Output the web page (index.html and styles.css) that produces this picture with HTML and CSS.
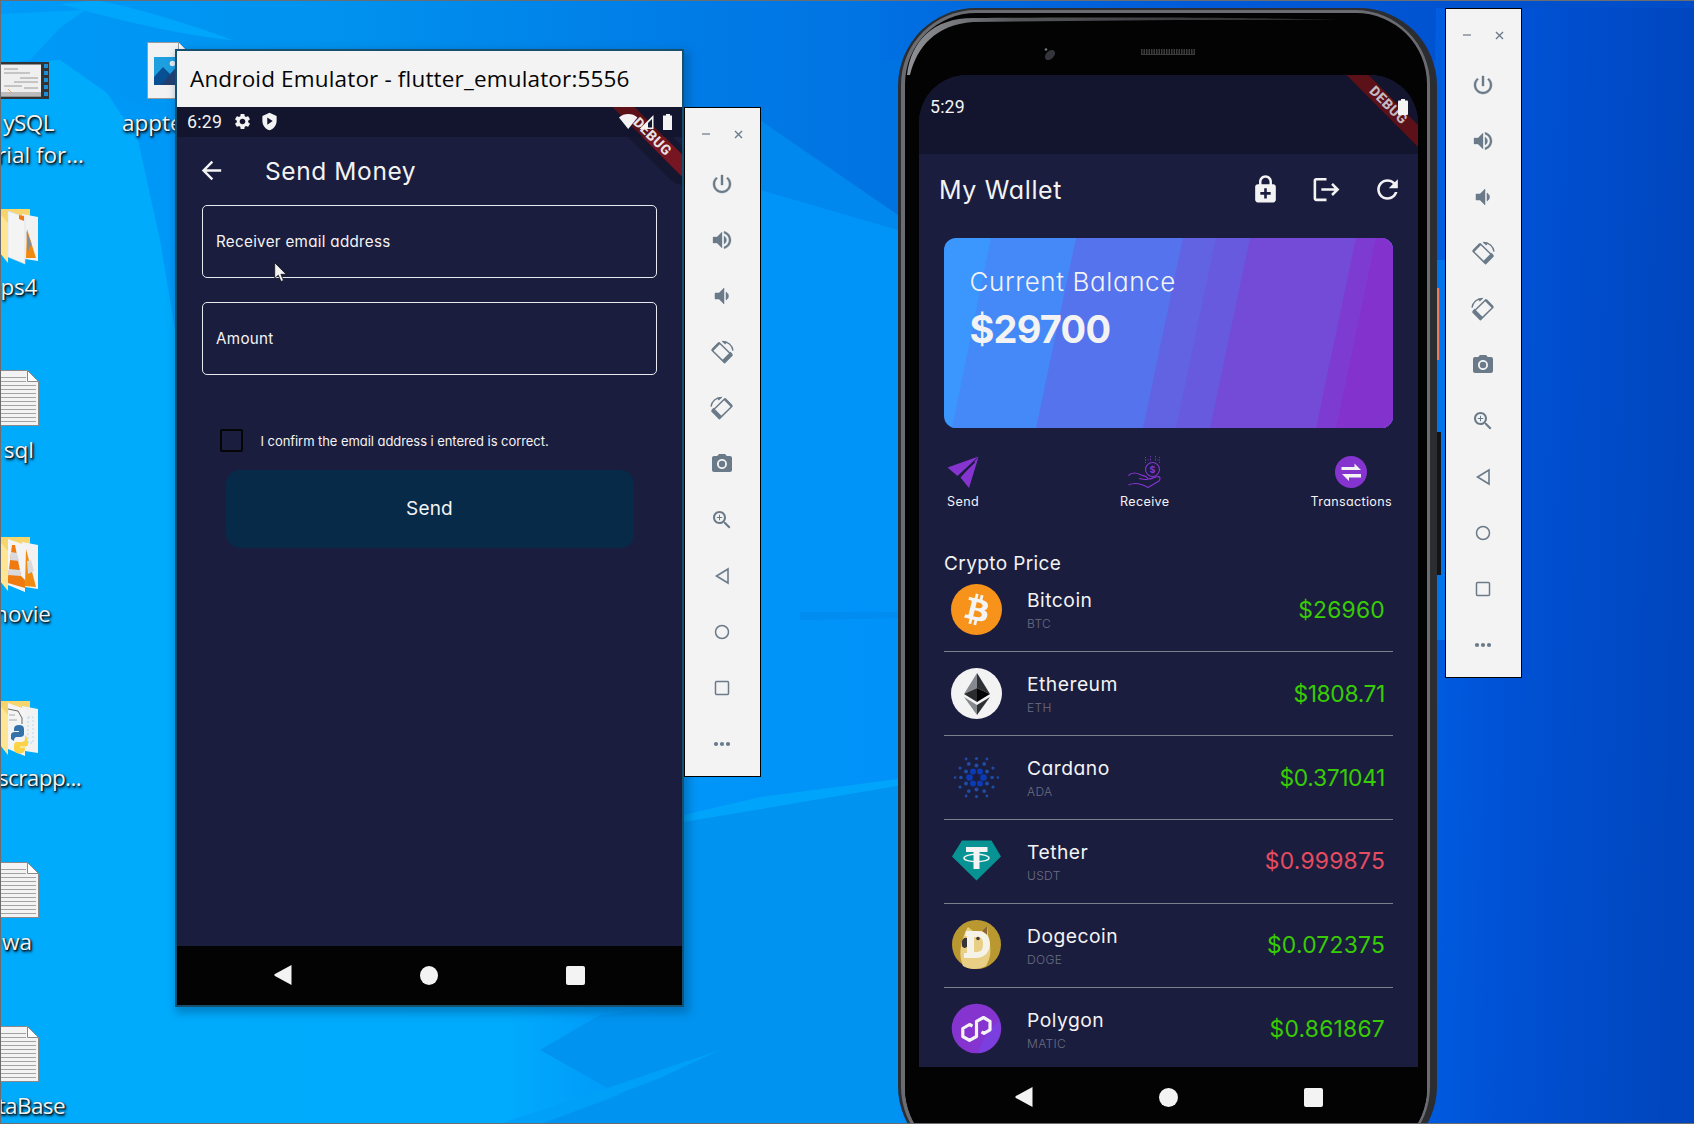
FILE: index.html
```html
<!DOCTYPE html>
<html lang="en">
<head>
<meta charset="utf-8">
<title>Desktop</title>
<link rel="stylesheet" href="styles.css">
</head>
<body>
<svg class="defs" width="0" height="0" aria-hidden="true">
  <symbol id="power" viewBox="0 0 24 24"><path d="M13 3h-2v10h2V3zm4.83 2.17l-1.42 1.42C17.99 7.86 19 9.81 19 12c0 3.87-3.13 7-7 7s-7-3.13-7-7c0-2.19 1.01-4.14 2.58-5.42L6.17 5.17C4.23 6.82 3 9.26 3 12c0 4.97 4.03 9 9 9s9-4.03 9-9c0-2.74-1.23-5.18-3.17-6.83z" stroke="currentColor" stroke-width=".4"/></symbol>
  <symbol id="vol-up" viewBox="0 0 24 24"><path d="M3 9v6h4l5 5V4L7 9H3zm13.5 3c0-1.77-1.02-3.29-2.5-4.03v8.05c1.48-.73 2.5-2.25 2.5-4.02zM14 3.23v2.06c2.89.86 5 3.54 5 6.71s-2.11 5.85-5 6.71v2.06c4.01-.91 7-4.49 7-8.77s-2.99-7.86-7-8.77z" stroke="currentColor" stroke-width=".3"/></symbol>
  <symbol id="vol-down" viewBox="0 0 24 24"><path d="M18.500 12c0-1.77-1.02-3.29-2.5-4.03v8.05c1.48-.73 2.5-2.25 2.5-4.02zM5 9v6h4l5 5V4L9 9H5z" stroke="currentColor" stroke-width=".5"/></symbol>
  <symbol id="rotate" viewBox="0 0 24 24"><path d="M9.200 2.800L2 10.200L14.600 22.600L22 15.200z" fill="none" stroke="currentColor" stroke-width="1.500" stroke-linejoin="round"/><path d="M8.200 2.200L1.400 9.200l1.800 1.800 6.900-7zM22.800 14.200l-8.600 8.600-2.400-2.400 8.700-8.600z"/><path d="M12.600 1.500C17.800 1.500 22.300 5 23 10.600" fill="none" stroke="currentColor" stroke-width="1.400"/><path d="M11.500.8l6 1.100-2.400 2.600z"/></symbol>
  <symbol id="camera" viewBox="0 0 24 24"><circle cx="12" cy="12" r="3.200"/><path d="M9 2L7.170 4H4c-1.100 0-2 .9-2 2v12c0 1.100.9 2 2 2h16c1.100 0 2-.9 2-2V6c0-1.100-.9-2-2-2h-3.170L15 2H9zm3 15c-2.760 0-5-2.240-5-5s2.240-5 5-5 5 2.240 5 5-2.240 5-5 5z"/></symbol>
  <symbol id="zoom-in" viewBox="0 0 24 24"><path d="M15.500 14h-.79l-.28-.27C15.410 12.590 16 11.110 16 9.500 16 5.910 13.090 3 9.500 3S3 5.910 3 9.500 5.910 16 9.500 16c1.610 0 3.090-.59 4.230-1.570l.27.28v.79l5 4.990L20.490 19l-4.990-5zm-6 0C7.010 14 5 11.990 5 9.500S7.010 5 9.500 5 14 7.010 14 9.500 11.990 14 9.500 14z"/><path d="M12.200 10h-2.200v2.200H9V10H6.800V9H9V6.800h1V9h2.200z"/></symbol>
  <symbol id="tri" viewBox="0 0 24 24"><path d="M18 5L6.500 12L18 19z" fill="none" stroke="currentColor" stroke-width="1.600"/></symbol>
  <symbol id="circ" viewBox="0 0 24 24"><circle cx="12" cy="12" r="6.500" fill="none" stroke="currentColor" stroke-width="1.500"/></symbol>
  <symbol id="sq" viewBox="0 0 24 24"><rect x="5.500" y="5.500" width="13" height="13" rx="1" fill="none" stroke="currentColor" stroke-width="1.500"/></symbol>
  <symbol id="dots" viewBox="0 0 24 24"><circle cx="6" cy="12" r="2.100"/><circle cx="12" cy="12" r="2.100"/><circle cx="18" cy="12" r="2.100"/></symbol>
  <symbol id="battery" viewBox="0 0 10 16"><path d="M3 0h4v1.500h2a1 1 0 0 1 1 1V15a1 1 0 0 1-1 1H1a1 1 0 0 1-1-1V2.500a1 1 0 0 1 1-1h2z"/></symbol>
  <symbol id="nav-back" viewBox="0 0 18 20"><path d="M17.500 0v20L.5 10.800v-1.600z"/></symbol>
  <symbol id="doc" viewBox="0 0 39 56"><path d="M0 .5h27.500l11 11v44H0z" fill="#f3f3f3" stroke="#8a8a8a"/><path d="M27.500.5v11h11z" fill="#fff" stroke="#8a8a8a"/><path d="M0 7.500h26M0 11.500h26M0 15.500h36M0 19.500h36M0 23.500h36M0 27.500h36M0 31.500h36M0 35.500h36M0 39.500h36M0 43.500h36M0 47.500h36M0 51.500h36" stroke="#a3a3a3"/></symbol>
</svg>

<main class="desktop">
  <svg class="wallpaper" viewBox="0 0 1694 1124" preserveAspectRatio="none">
    <defs>
      <linearGradient id="wl" x1="0" x2="1" y1="0" y2="0"><stop offset="0" stop-color="#00abfc"/><stop offset=".3" stop-color="#00aafc"/><stop offset=".38" stop-color="#0096f8"/><stop offset=".53" stop-color="#0092f8"/><stop offset=".55" stop-color="#0078ec"/><stop offset=".85" stop-color="#0058dc"/><stop offset="1" stop-color="#0048c2"/></linearGradient>
      <linearGradient id="wr" x1="0" x2="1" y1="0" y2=".1"><stop offset="0" stop-color="#0060e2"/><stop offset=".35" stop-color="#0052d6"/><stop offset="1" stop-color="#0046be"/></linearGradient>
      <linearGradient id="wt" x1="0" x2="1" y1="0" y2="0"><stop offset="0" stop-color="#009af8"/><stop offset=".35" stop-color="#0092ee"/><stop offset=".75" stop-color="#007ae6"/><stop offset="1" stop-color="#0070e0"/></linearGradient>
      <linearGradient id="wtop" x1="0" x2="1" y1="0" y2="0"><stop offset="0" stop-color="#0070e2"/><stop offset=".4" stop-color="#005ad8"/><stop offset="1" stop-color="#004cc8"/></linearGradient>
    </defs>
    <rect width="1694" height="1124" fill="url(#wl)"/>
    <path d="M0 0H960V170L898 225L760 130L170 130L110 95L60 60L0 66z" fill="url(#wt)"/>
    <path d="M105 90L175 120V330L160 240L138 140z" fill="#0098f7"/>
    <path d="M0 14L85 10L60 28L30 60L0 64z" fill="#00a6fb"/>
    <path d="M95 0C140 8 200 28 232 40C190 36 140 26 60 4z" fill="#00a6fb"/>
    <path d="M760 120L898 215V235L760 195z" fill="#0088ee"/>
    <path d="M760 190L898 230V620L760 560z" fill="#0094f9"/>
    <path d="M800 612L898 612V618L800 620z" fill="#008cf0"/>
    <path d="M684 815L760 797L898 779V786L780 806L684 822z" fill="#00a4fa"/>
    <path d="M684 822L780 806L898 786V1124H540L620 1095L540 1050L600 1015L684 1007z" fill="#0093ef"/>
    <path d="M500 1124L560 1104L720 1050L660 1078L540 1124z" fill="#00a0f8"/>
    <path d="M880 0H1694V60H880z" fill="url(#wtop)"/>
    <path d="M1436 8H1694V1124H1420z" fill="url(#wr)"/>
    <path d="M1436 260H1446V640H1436z" fill="#0074ea"/>
  </svg>

  <!-- desktop shortcuts -->
  <svg class="thumb" width="50" height="38" viewBox="0 0 50 38"><path d="M0 0h49v37H0z" fill="#333"/><path d="M0 2.500h41v32H0z" fill="#efefef"/><path d="M0 30h41v4H0z" fill="#bcbcbc"/><path d="M4 7h14M4 11h26M20 16h18M14 20h24M4 24h18M24 26h14" stroke="#9a9a9a"/><path d="M8 27l4 4" stroke="#f0a050"/><path d="M44 2h4v4h-4zM44 9h4v4h-4zM44 16h4v4h-4zM44 23h4v4h-4zM44 30h4v4h-4z" fill="#1990d8"/></svg>
  <div class="label l-mysql">ySQL</div>
  <div class="label l-tutorial">rial for...</div>
  <svg class="picture" width="40" height="57" viewBox="0 0 40 57"><path d="M.5.5h31l8 8v48H.5z" fill="#f2f2f2" stroke="#999"/><path d="M31.500.5v8h8" fill="#fff" stroke="#999"/><path d="M7 15h33v28H7z" fill="#1e9fe0"/><circle cx="25.500" cy="21.500" r="2.800" fill="#e8eef4"/><path d="M7 35l9-10 7 7 5-5 12 10v6H7z" fill="#084f93"/><path d="M14 43l14-16 12 10v6z" fill="#233f70"/></svg>
  <div class="label l-apptest">appte</div>
  <svg class="folder f-ps4" width="39" height="56" viewBox="0 0 39 56"><path d="M0 0h30v40H0z" fill="#f7d56e"/><path d="M22 5l16 3v44l-13-2z" fill="#f2f2f2"/><path d="M27 20l9 29H26z" fill="#f08a10"/><path d="M26.500 22l5 13-4 8z" fill="#888e98"/><path d="M8 2l17 6v47L8 48z" fill="#f4f4f4" stroke="#d4dcea" stroke-width=".6"/><path d="M19 6l5 1v5l-5-2z" fill="#ee7a10"/><path d="M0 5l8 9v40L0 44z" fill="#fee695"/></svg>
  <div class="label l-ps4">ps4</div>
  <svg class="file d-sql" width="39" height="56"><use href="#doc"/></svg>
  <div class="label l-sql">sql</div>
  <svg class="folder f-movie" width="39" height="56" viewBox="0 0 39 56"><path d="M0 0h30v40H0z" fill="#f7d56e"/><path d="M22 5l16 3v44l-13-2z" fill="#f2f2f2"/><path d="M26 12l10 38-11-1z" fill="#f08a10"/><path d="M27 24l4-1 3 11-6 3z" fill="#d8dade"/><path d="M8 2l17 6v47L8 48z" fill="#f4f4f4"/><path d="M12 8h3l6 31 4 4v8L8 46v-6z" fill="#ee7a10"/><path d="M11 15l6 1 2 8-9-1zM9 32l11 1 1 6-13-1z" fill="#d8dade"/><path d="M0 5l8 9v40L0 44z" fill="#fee695"/></svg>
  <div class="label l-movie">movie</div>
  <svg class="folder f-scrap" width="39" height="56" viewBox="0 0 39 56"><path d="M0 0h30v40H0z" fill="#f7d56e"/><path d="M22 5l16 3v44l-13-2z" fill="#f2f2f2"/><path d="M28 16h5v26h-5z" fill="none" stroke="#a9dcf4" stroke-dasharray="2 2"/><path d="M8 2l17 6v47L8 48z" fill="#f4f4f4"/><path d="M8 8l10 2 4 7v6" fill="none" stroke="#666"/><path d="M9 14h6M9 19h8" stroke="#aaa"/><path d="M11 38v-4q0-3 4-3h4v-1h-5v-2q0-4 5-4t5 4v5q0 3-4 3h-3q-3 0-3 4z" fill="#3272a8"/><path d="M25 34v4q0 3-4 3h-4q-3 0-3 4v3q0 4 5 4.500t6-4v-2h-5v-1h5q4 0 3-5t-3-6.500z" fill="#fbd344"/><path d="M0 5l8 9v40L0 44z" fill="#fee695"/></svg>
  <div class="label l-scrap">scrapp...</div>
  <svg class="file d-wa" width="39" height="56"><use href="#doc"/></svg>
  <div class="label l-wa">wa</div>
  <svg class="file d-base" width="39" height="56"><use href="#doc"/></svg>
  <div class="label l-base">taBase</div>

  <!-- emulator window -->
  <section class="window">
    <header class="titlebar">Android Emulator - flutter_emulator:5556</header>
    <div class="app">
      <div class="statusbar">
        <span class="clock">6:29</span>
        <svg class="gear" width="19" height="19" viewBox="0 0 24 24"><path d="M19.140 12.940c.04-.3.060-.61.060-.94 0-.32-.02-.64-.07-.94l2.030-1.580c.18-.14.23-.41.12-.61l-1.920-3.320c-.12-.22-.37-.29-.59-.22l-2.390.96c-.5-.38-1.030-.7-1.620-.94l-.36-2.540c-.04-.24-.24-.41-.48-.41h-3.840c-.24 0-.43.17-.47.41l-.36 2.540c-.59.24-1.130.57-1.620.94l-2.390-.96c-.22-.08-.47 0-.59.22L2.740 8.870c-.12.21-.08.47.12.61l2.030 1.580c-.05.3-.09.63-.09.94s.02.64.07.94l-2.030 1.580c-.18.14-.23.41-.12.61l1.920 3.320c.12.22.37.29.59.22l2.390-.96c.5.38 1.030.7 1.620.94l.36 2.540c.05.24.24.41.48.41h3.840c.24 0 .44-.17.47-.41l.36-2.540c.59-.24 1.130-.56 1.620-.94l2.390.96c.22.08.47 0 .59-.22l1.920-3.320c.12-.22.07-.47-.12-.61l-2.010-1.580zM12 15.600c-1.980 0-3.600-1.620-3.600-3.600s1.620-3.600 3.600-3.600 3.600 1.620 3.600 3.600-1.620 3.600-3.600 3.600z"/></svg>
        <svg class="shield" width="19" height="19" viewBox="0 0 24 24"><path fill-rule="evenodd" d="M12 1L3 5v6c0 5.550 3.840 10.740 9 12 5.160-1.260 9-6.450 9-12V5zM9.200 7l6.800 4.500L9.200 16z"/></svg>
        <svg class="signals" width="54" height="18" viewBox="0 0 54 18"><path d="M0 4.500C2.500 2 5.800 1 9.200 1s6.800 1 9.200 3.500L9.200 16z"/><path d="M34.500 2v14H20.500z" /><path d="M33 6v8.500h-4V10z" fill="#12152d"/><path d="M47 1h4v1.500h2V17h-9V2.500h3z"/></svg>
      </div>
      <svg class="banner" width="505" height="90" viewBox="0 0 505 90"><path d="M451 30H496L505 39V78Q498 77 494 73z" fill="#14172f"/><path d="M435.500 0h22L505 47.500v22z" fill="#5c1119"/><path d="M465.500 30h22L505 47.500v22z" fill="#761622"/><text class="banner-text" transform="translate(475.500 29.500) rotate(45)" text-anchor="middle" y="4.800">DEBUG</text></svg>
      <div class="appbar">
        <svg width="29" height="29" viewBox="0 0 24 24"><path d="M20 11H7.830l5.590-5.590L12 4l-8 8 8 8 1.410-1.410L7.830 13H20v-2z"/></svg>
        <h1>Send Money</h1>
      </div>
      <form class="form">
        <div class="field">Receiver email address</div>
        <div class="field amount">Amount</div>
        <div class="confirm"><span class="box"></span><span>I confirm the email address i entered is correct.</span></div>
        <div class="send">Send</div>
      </form>
      <nav class="navbar"><svg width="18" height="20"><use href="#nav-back"/></svg><i class="home"></i><i class="recent"></i></nav>
    </div>
  </section>

  <aside class="tools tools-left">
    <div class="tools-head"><i class="min"></i><svg width="9" height="9" viewBox="0 0 9 9"><path d="M1 1l7 7M8 1l-7 7" stroke="#6b7a89" stroke-width="1.400"/></svg></div>
    <svg><use href="#power"/></svg><svg><use href="#vol-up"/></svg><svg><use href="#vol-down"/></svg><svg><use href="#rotate"/></svg><svg class="flip"><use href="#rotate"/></svg><svg><use href="#camera"/></svg><svg><use href="#zoom-in"/></svg><svg><use href="#tri"/></svg><svg><use href="#circ"/></svg><svg><use href="#sq"/></svg><svg><use href="#dots"/></svg>
  </aside>

  <!-- phone -->
  <i class="side-key orange"></i><i class="side-key dark"></i>
  <section class="phone"><div class="rim"><div class="bezel">
    <div class="sensors"><svg width="522" height="62" viewBox="0 0 522 62"><defs><linearGradient id="shine"><stop offset="0" stop-color="#a9abb1"/><stop offset=".25" stop-color="#66676c"/><stop offset="1" stop-color="#2a2a2c"/></linearGradient></defs><path d="M2 62C6 28 28 5 68 5C300 4 350 5 435 7L270 7L68 9C30 12 12 34 5 62z" fill="url(#shine)" opacity=".85"/><ellipse cx="145" cy="42" rx="6" ry="4" fill="#33343c" transform="rotate(-45 145 42)"/><circle cx="141" cy="36.500" r="1.300" fill="#777"/><path d="M236 38.500h54" stroke="#3c3c3c" stroke-width="5" stroke-dasharray="1.500 1"/><path d="M236 41.500h54" stroke="#3c3c3c"/></svg></div>
    <div class="screen">
      <div class="status2"><span>5:29</span><svg width="10" height="16"><use href="#battery"/></svg></div>
      <svg class="banner2" width="499" height="80" viewBox="0 0 499 80"><path d="M427.500 0h22L499 50v22z" fill="#5c1119"/><text class="banner-text dim" transform="translate(469.500 30) rotate(45)" text-anchor="middle" y="4.800">DEBUG</text></svg>
      <div class="appbar2"><h2>My Wallet</h2>
        <svg width="31" height="31" viewBox="0 0 24 24"><path d="M18 8h-1V6c0-2.760-2.240-5-5-5S7 3.240 7 6v2H6c-1.100 0-2 .9-2 2v10c0 1.100.9 2 2 2h12c1.100 0 2-.9 2-2V10c0-1.100-.9-2-2-2zM8.900 6c0-1.710 1.390-3.100 3.100-3.100s3.100 1.390 3.100 3.100v2H8.900V6zM16 16h-3v3h-2v-3H8v-2h3v-3h2v3h3v2z"/></svg>
        <svg width="31" height="31" viewBox="0 0 24 24"><path d="M17 7l-1.410 1.410L18.170 11H8v2h10.170l-2.580 2.580L17 17l5-5zM4 5h8V3H4c-1.100 0-2 .9-2 2v14c0 1.100.9 2 2 2h8v-2H4V5z"/></svg>
        <svg width="31" height="31" viewBox="0 0 24 24"><path d="M17.650 6.350C16.200 4.900 14.210 4 12 4c-4.420 0-7.990 3.580-7.990 8s3.570 8 7.990 8c3.730 0 6.840-2.550 7.730-6h-2.080c-.82 2.330-3.040 4-5.650 4-3.310 0-6-2.690-6-6s2.690-6 6-6c1.660 0 3.140.69 4.220 1.780L13 11h7V4l-2.350 2.350z"/></svg>
      </div>
      <div class="content">
        <div class="card">
          <svg class="stripes" width="449" height="190" viewBox="0 0 449 190" preserveAspectRatio="none"><rect width="449" height="190" fill="#3b96fe"/><path d="M47 0H449V190H8z" fill="#4489f7"/><path d="M132 0H449V190H92z" fill="#5573ed"/><path d="M239 0H449V190H199z" fill="#6163e3"/><path d="M272 0H449V190H232z" fill="#675adf"/><path d="M306 0H449V190H266z" fill="#744bd7"/><path d="M412 0H449V190H372z" fill="#7e3bd1"/><path d="M432 0H449V190H392z" fill="#8432cd"/></svg>
          <div class="balance"><p>Current Balance</p><strong>$29700</strong></div>
        </div>
        <div class="actions">
          <div><svg width="32" height="32" viewBox="0 0 32 32"><path d="M.5 11.500L31.500.5L10.500 20zM31.500 1L22 32L13.500 21.500z" /><path d="M27.500 6L12 20.800" stroke="#1b1d3f" stroke-width="1.600"/></svg><span>Send</span></div>
          <div><svg width="33" height="32" viewBox="0 0 33 32" fill="none" stroke="#8634cf" stroke-width="1.100"><circle cx="24.500" cy="13.500" r="7"/><path d="M17.500 1v6M22.500 0v5M27.500 0v5M31.500 1v6M17 4h6M27 4h5" stroke-dasharray="1 1.500" stroke-width=".9"/><path d="M.5 19.500C4 16 8 16.500 12 18.500s6 1 7.500 3.500-4 1.500-8.500.5M19.500 23C24 23.500 26 20.500 31 20.500c2 1.500 1 3 0 4.500L20 31.500C14 28 8 25.500.5 29"/><text x="24.500" y="17.200" text-anchor="middle" class="coin">$</text></svg><span>Receive</span></div>
          <div><svg width="32" height="32" viewBox="0 0 32 32"><circle cx="16" cy="16" r="16"/><path d="M6.500 11h13V7.500l6.500 6.500H6.500zM26 21.500H14v3.500l-7-7h19z" fill="#f3f3f3"/></svg><span>Transactions</span></div>
        </div>
        <h3>Crypto Price</h3>
        <ul class="coins">
          <li><svg viewBox="0 0 32 32"><circle cx="16" cy="16" r="16" fill="#f7931a"/><path fill="#f4f4f4" d="M23.189 14.020c.314-2.096-1.283-3.223-3.465-3.975l.708-2.840-1.728-.43-.69 2.765c-.454-.114-.92-.22-1.385-.326l.695-2.783L15.596 6l-.708 2.839c-.376-.086-.746-.17-1.104-.26l.002-.009-2.384-.595-.46 1.846s1.283.294 1.256.312c.7.175.826.638.805 1.006l-.806 3.235c.048.012.11.030.18.057l-.183-.045-1.130 4.532c-.086.212-.303.531-.793.41.018.025-1.256-.313-1.256-.313l-.858 1.978 2.250.561c.418.105.828.215 1.231.318l-.715 2.872 1.727.43.708-2.840c.472.127.93.245 1.378.357l-.706 2.828 1.728.43.715-2.866c2.948.558 5.164.333 6.097-2.333.752-2.146-.037-3.385-1.588-4.192 1.130-.26 1.980-1.003 2.207-2.538zm-3.950 5.538c-.533 2.147-4.148.986-5.320.695l.95-3.805c1.172.293 4.929.872 4.370 3.110zm.535-5.569c-.487 1.953-3.495.96-4.470.717l.86-3.450c.975.243 4.118.696 3.610 2.733z"/></svg><div><b>Bitcoin</b><small>BTC</small></div><em>$26960</em></li>
          <li><svg viewBox="0 0 51 51"><circle cx="25.500" cy="25.500" r="25.500" fill="#f3f3f3"/><path d="M26 5L13 26l13-6z" fill="#85888e"/><path d="M26 5l13 21-13-6z" fill="#2f3033"/><path d="M13 26l13-6v14z" fill="#2b2b2d"/><path d="M39 26l-13-6v14z" fill="#030303"/><path d="M13 29l13 8v10z" fill="#85888e"/><path d="M39 29l-13 8v10z" fill="#2f3033"/></svg><div><b>Ethereum</b><small>ETH</small></div><em class="tight">$1808.71</em></li>
          <li><svg viewBox="-25.500 -25.500 51 51" fill="#0a3bb4"><g><circle cx="-7" r="3.300"/><circle cx="7" r="3.300"/><circle cx="-3.500" cy="-6.100" r="3"/><circle cx="3.500" cy="-6.100" r="3"/><circle cx="-3.500" cy="6.100" r="3"/><circle cx="3.500" cy="6.100" r="3"/></g><g fill="#1f4da6"><circle cx="-10.500" cy="-6" r="2"/><circle cx="10.500" cy="-6" r="2"/><circle cy="-12" r="2"/><circle cy="12" r="2"/><circle cx="-10.500" cy="6" r="2"/><circle cx="10.500" cy="6" r="2"/><circle cx="-15.600" r="1.800"/><circle cx="15.600" r="1.800"/><circle cx="-7.700" cy="-13.600" r="1.900"/><circle cx="7.700" cy="-13.600" r="1.900"/><circle cx="-7.700" cy="13.600" r="1.900"/><circle cx="7.700" cy="13.600" r="1.900"/><circle cx="-16.500" cy="-9.500" r="1.600"/><circle cx="16.500" cy="-9.500" r="1.600"/><circle cy="-19" r="1.600"/><circle cy="19" r="1.600"/><circle cx="-16.500" cy="9.500" r="1.600"/><circle cx="16.500" cy="9.500" r="1.600"/><circle cx="-21.400" r="1.300"/><circle cx="21.400" r="1.300"/><circle cx="-10.400" cy="-18.500" r="1.400"/><circle cx="10.400" cy="-18.500" r="1.400"/><circle cx="-10.400" cy="18.500" r="1.400"/><circle cx="10.400" cy="18.500" r="1.400"/></g></svg><div><b>Cardano</b><small>ADA</small></div><em class="tight">$0.371041</em></li>
          <li><svg viewBox="0 0 51 51"><path d="M11 5.500H40.500L50 21.500L25.500 45.500L1 21.500z" fill="#079393"/><path d="M15 12h21.500v5H28.500v17h-6V17H15z" fill="#f3f3f3"/><ellipse cx="25.500" cy="23" rx="12.500" ry="3.700" fill="none" stroke="#f3f3f3" stroke-width="1.500"/></svg><div><b>Tether</b><small>USDT</small></div><em class="down">$0.999875</em></li>
          <li><svg viewBox="0 0 51 51"><circle cx="25.500" cy="25.500" r="24.500" fill="#b8982f"/><path d="M12 47C8 38 9 28 12 20C13 15 15 11 17 8l5 4h9l5-5c1 7 1 9 2 15 3 10 1 18-3 25C28 51 18 51 12 47z" fill="#e8cf85"/><path d="M36 7l-5 5 5 4z" fill="#8d6433"/><path d="M11 22c2-4 4-4 6-2v7c-3 3-5 2-6 0z" fill="#38343a"/><path fill-rule="evenodd" d="M15 12h11c9 0 13 6 13 13s-5 14-14 14H13v-5h3V17h-2zM23 18v15h2c5 0 7-2 7-8s-2-7-7-7z" fill="#f5f2e8"/><circle cx="27" cy="19.500" r="1.800" fill="#4a3a2c"/></svg><div><b>Dogecoin</b><small>DOGE</small></div><em>$0.072375</em></li>
          <li><svg viewBox="0 0 51 51"><circle cx="25.500" cy="25.500" r="24.800" fill="#8534cf"/><path d="M48 17A24.800 24.800 0 0 1 27 50.200C30 38 38 28 48 17z" fill="#7b3fe0"/><path d="M30.500 28.800L33 30.300L39 26.800V18.300L32.500 14.500L25.500 18.300V33.500L18.500 37.300L11.800 33.500V25.500L18.500 21.500L21.500 23.200" fill="none" stroke="#f3f3f3" stroke-width="3.200" stroke-linejoin="round"/></svg><div><b>Polygon</b><small>MATIC</small></div><em>$0.861867</em></li>
        </ul>
      </div>
    </div>
    <nav class="navbar navbar2"><svg width="18" height="20"><use href="#nav-back"/></svg><i class="home"></i><i class="recent"></i></nav>
  </div></div></section>

  <aside class="tools tools-right">
    <div class="tools-head"><i class="min"></i><svg width="9" height="9" viewBox="0 0 9 9"><path d="M1 1l7 7M8 1l-7 7" stroke="#6b7a89" stroke-width="1.400"/></svg></div>
    <svg><use href="#power"/></svg><svg><use href="#vol-up"/></svg><svg><use href="#vol-down"/></svg><svg><use href="#rotate"/></svg><svg class="flip"><use href="#rotate"/></svg><svg><use href="#camera"/></svg><svg><use href="#zoom-in"/></svg><svg><use href="#tri"/></svg><svg><use href="#circ"/></svg><svg><use href="#sq"/></svg><svg><use href="#dots"/></svg>
  </aside>

  <svg class="cursor" width="14" height="21" viewBox="0 0 14 21"><path d="M.7.7V16.500L4.300 13.200L7 19.500L9.500 18.400L6.900 12.300H12.200z" fill="#f4f4f4" stroke="#111" stroke-width=".8"/></svg>
</main>
</body>
</html>
```
FILE: styles.css
```css
* { box-sizing: border-box; }
body { margin: 0; }
h1, h2, h3, p, ul { margin: 0; padding: 0; font-weight: 400; }
.defs { position: absolute; }
.desktop {
  position: relative; width: 1694px; height: 1124px; overflow: hidden;
  font-family: "Inter", sans-serif; font-feature-settings: "cv11"; color: #f3f3f3;
}
.desktop::after {
  content: ""; position: absolute; inset: 0;
  border: 1px solid #6b6d70; border-right: 0;
}
.wallpaper { position: absolute; inset: 0; width: 100%; height: 100%; }

/* shortcuts */
.thumb, .picture, .folder, .file, .label { position: absolute; left: 0; }
.thumb { top: 62px; }
.picture { left: 147px; top: 42px; }
.f-ps4 { top: 209px; }
.d-sql { top: 370px; }
.f-movie { top: 537px; }
.f-scrap { top: 701px; }
.d-wa { top: 862px; }
.d-base { top: 1026px; }
.label {
  display: flex; justify-content: flex-end;
  font: 22.500px/32px "Open Sans", "Noto Sans", sans-serif; white-space: nowrap;
  text-shadow: 1px 1px 2px #000, 1px 2px 3px rgba(0, 0, 0, .8);
}
.l-mysql { top: 107px; width: 54px; letter-spacing: -.5px; }
.l-tutorial { top: 139px; width: 84px; }
.l-apptest { top: 107px; left: 122px; }
.l-ps4 { top: 271px; width: 37px; letter-spacing: -.3px; }
.l-sql { top: 434px; width: 34px; }
.l-movie { top: 598px; width: 51px; }
.l-scrap { top: 762px; width: 81px; letter-spacing: -.6px; }
.l-wa { top: 926px; width: 32px; }
.l-base { top: 1090px; width: 65px; letter-spacing: -.6px; }

/* emulator window */
.window {
  position: absolute; left: 175px; top: 49px; width: 509px; height: 958px;
  border: 2px solid #17506e; background: #1b1d3f;
  box-shadow: 3px 4px 8px 2px rgba(0, 70, 120, .4);
}
.titlebar {
  height: 56px; padding-left: 13px; background: #f3f3f3; color: #050505;
  font: 22.500px/56px "Open Sans", "Noto Sans", sans-serif; letter-spacing: .16px;
}
.app { position: relative; display: flex; flex-direction: column; height: 898px; }
.app > * { position: relative; }
.statusbar {
  display: flex; align-items: center; height: 30px; padding: 0 10px 1px 10px;
  font-family: "Roboto", sans-serif;
}
.statusbar svg { fill: #f3f3f3; }
.app > .statusbar { z-index: 2; }
.app::before { content: ""; position: absolute; left: 0; right: 0; top: 0; height: 30px; background: #12152d; }
.clock { font-size: 17.800px; letter-spacing: .2px; }
.gear { margin-left: 11px; }
.shield { margin-left: 8px; }
.signals { margin-left: auto; margin-right: -1px; }
.app > .banner { position: absolute; left: 0; top: 0; z-index: 1; }
.banner-text { font: 800 14px "Roboto", sans-serif; letter-spacing: .5px; fill: #e9e2e4; }
.dim { fill: #c3bcc4; }
.appbar { display: flex; align-items: center; height: 68px; padding: 0 0 1px 20px; fill: #f3f3f3; }
.appbar h1 { margin-left: 39px; font-size: 24.500px; letter-spacing: .6px; }
.form { flex: 1; padding: 0 25px 0 24.500px; }
.field {
  display: flex; align-items: center; height: 73px; padding: 0 0 1px 13.500px;
  border: 1.500px solid #e8e9ee; border-radius: 5px; font-size: 15.200px; letter-spacing: .3px;
}
.amount { margin-top: 24px; }
.confirm {
  display: flex; align-items: center; gap: 18px; height: 30px; margin: 51px 0 0 18px;
  padding-bottom: 1px; font-size: 13px; letter-spacing: -.06px; white-space: nowrap;
}
.box { width: 23px; height: 23px; border: 2px solid #050505; border-radius: 2px; }
.send {
  display: grid; place-items: center; height: 78px; margin: 13.500px 23.500px 0 24px;
  border-radius: 14px; background: #072a49; font-size: 19px; letter-spacing: .2px;
}
.navbar {
  display: flex; align-items: center; gap: 128px; height: 59px; padding: 0 0 1px 97px;
  background: #030303; fill: #f3f3f3;
}
.home { width: 18px; height: 19px; border-radius: 50%; background: #f3f3f3; }
.recent { width: 19px; height: 19px; border-radius: 2px; background: #f3f3f3; }

/* emulator side toolbars */
.tools {
  position: absolute; display: grid; grid-template-rows: 48px; grid-auto-rows: 56px;
  place-items: center; width: 77px; height: 670px; border: 1px solid #000;
  padding-right: 1px; background: #f3f3f3; color: #6b7a89; fill: #6b7a89;
}
.tools-left { left: 684px; top: 107px; }
.tools-right { left: 1445px; top: 8px; }
.tools > svg { width: 24px; height: 24px; }
.tools .flip { transform: scaleX(-1); }
.tools-head { display: flex; align-items: center; gap: 24px; padding: 4px 0 0 1px; }
.min { width: 8px; height: 2px; background: #a3a9b0; }

/* phone */
.side-key { position: absolute; left: 1434px; width: 6px; }
.orange { top: 288px; height: 72px; background: #f0795c; border-right: 1px solid #c8452e; }
.dark { top: 432px; height: 143px; width: 7px; background: #141416; }
.phone {
  position: absolute; left: 898px; top: 8px; width: 539px; height: 1156px;
  padding: 2px 7px 0 3px; border-radius: 78px; background: #2c2d31;
}
.rim { height: 1152px; padding: 3px 3px 0 4px; border-radius: 75px; background: #6a6c72; }
.bezel { height: 1146px; border-radius: 71px; background: #030303; overflow: hidden; }
.sensors { height: 62px; }
.sensors svg { display: block; }
.screen {
  position: relative; width: 499px; height: 992px; margin-left: 14px; overflow: hidden;
  border-radius: 48px 48px 0 0; background: #1b1d3f;
}
.status2 {
  display: flex; justify-content: space-between; align-items: center; height: 79px;
  padding: 0 10px 15px 11px; background: #12152d; fill: #f3f3f3;
  font: 17.700px "Roboto", sans-serif; letter-spacing: .2px;
}
.status2 svg { position: relative; z-index: 2; }
.banner2 { position: absolute; left: 0; top: 0; }
.appbar2 { display: flex; align-items: center; gap: 30px; height: 72px; padding: 0 15px 1px 20px; fill: #f3f3f3; }
.appbar2 h2 { flex: 1; font-size: 25px; letter-spacing: .65px; }
.content { padding: 11.500px 25px 0; }
.card { display: grid; height: 190.500px; border-radius: 12px; overflow: hidden; }
.card > * { grid-area: 1 / 1; }
.stripes { width: 100%; height: 100%; }
.balance { padding: 28.500px 0 0 25.500px; z-index: 1; }
.balance p { font-size: 26px; font-weight: 350; line-height: 32px; letter-spacing: .6px; }
.balance strong { display: block; margin-top: 6px; font-size: 38px; line-height: 50px; letter-spacing: -.8px; }
.actions { display: flex; justify-content: space-between; padding: 28px 1px 0 3px; fill: #8634cf; }
.actions div { display: flex; flex-direction: column; align-items: center; gap: 5.500px; font-size: 12.600px; line-height: 16px; letter-spacing: .33px; }
.coin { font: 700 9px "Inter", sans-serif; fill: #8634cf; stroke: none; }
.content h3 { margin-top: 36px; font-size: 19px; line-height: 36px; letter-spacing: .4px; }
.coins { list-style: none; }
.coins li {
  display: flex; align-items: center; height: 70.500px; margin-bottom: 13.400px;
  padding: 0 8px 14px 7px; border-bottom: 1px solid #7d7f8d;
}
.coins svg { width: 51px; height: 51px; }
.coins div { flex: 1; margin-left: 25px; padding-top: 6px; line-height: 24px; }
.coins b { display: block; font-size: 19.300px; font-weight: 400; letter-spacing: .48px; }
.coins small { display: block; font-size: 12px; font-weight: 300; letter-spacing: .35px; color: #6a6e81; }
.coins em { font-size: 22.800px; font-style: normal; font-weight: 370; letter-spacing: .25px; color: #38cc04; }
.coins .tight { letter-spacing: -.35px; }
.coins .down { color: #e64c60; }
.navbar2 { height: 61px; gap: 126px; padding-left: 109.500px; }
.navbar2 .home { width: 19px; }

.cursor { position: absolute; left: 274px; top: 262px; }
```
